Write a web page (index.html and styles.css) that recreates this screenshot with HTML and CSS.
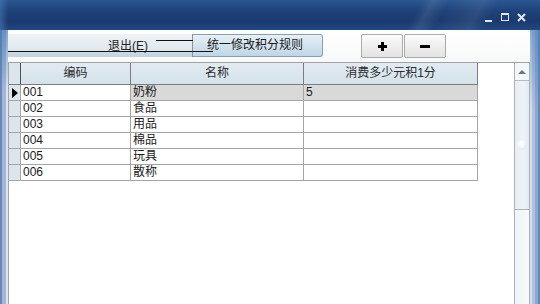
FILE: index.html
```html
<!DOCTYPE html>
<html lang="zh">
<head>
  <meta charset="UTF-8" />
  <title>积分规则</title>
  <link rel="stylesheet" href="styles.css">
</head>
<body>
  <div class="window">

    <!-- 标题栏 -->
    <div class="titlebar">
      <svg class="caption-buttons" width="41" height="10" viewBox="0 0 41 10">
        <rect x="0" y="8" width="7" height="2" fill="#dde8f4"/>
        <rect x="16.5" y="1.5" width="7" height="7" fill="none" stroke="#dde8f4" stroke-width="1"/>
        <rect x="16" y="1" width="8" height="2" fill="#dde8f4"/>
        <path d="M33 2 L40 9 M40 2 L33 9" stroke="#dde8f4" stroke-width="2"/>
      </svg>
    </div>

    <div class="frame">
      <div class="frame-left"></div>

      <div class="client">
        <!-- 工具栏 -->
        <div class="toolbar">
          <div class="rule-button">
            <div class="exit-part">
              <span class="exit-label">退出(E)</span>
            </div>
            <div class="rule-part">统一修改积分规则</div>
          </div>
          <div class="step-buttons">
            <button class="step">
              <svg width="9" height="9" viewBox="0 0 9 9"><rect x="0" y="3" width="9" height="3"/><rect x="3" y="0" width="3" height="9"/></svg>
            </button>
            <button class="step">
              <svg width="10" height="3" viewBox="0 0 10 3"><rect x="0" y="0" width="10" height="3"/></svg>
            </button>
          </div>
        </div>

        <!-- 数据表 -->
        <div class="grid">
          <div class="grid-body">
            <table class="data-table">
              <thead>
                <tr>
                  <th class="ind"></th>
                  <th class="col-code">编码</th>
                  <th class="col-name">名称</th>
                  <th class="col-rate">消费多少元积1分</th>
                </tr>
              </thead>
              <tbody>
                <tr class="current">
                  <td class="ind"><span class="pointer"></span></td>
                  <td>001</td>
                  <td class="sel">奶粉</td>
                  <td class="sel">5</td>
                </tr>
                <tr><td class="ind"></td><td>002</td><td>食品</td><td></td></tr>
                <tr><td class="ind"></td><td>003</td><td>用品</td><td></td></tr>
                <tr><td class="ind"></td><td>004</td><td>棉品</td><td></td></tr>
                <tr><td class="ind"></td><td>005</td><td>玩具</td><td></td></tr>
                <tr><td class="ind"></td><td>006</td><td>散称</td><td></td></tr>
              </tbody>
            </table>
          </div>

          <div class="scrollbar">
            <div class="scroll-up"><span class="arrow-up"></span></div>
            <div class="scroll-thumb"><span class="grip"></span></div>
            <div class="scroll-track"></div>
          </div>
        </div>
      </div>

      <div class="frame-right"></div>
    </div>
  </div>
</body>
</html>
```

FILE: styles.css
```css
body, html {
  margin: 0;
  width: 540px;
  height: 304px;
  overflow: hidden;
  font-family: "Liberation Sans", "Noto Sans CJK SC", sans-serif;
  font-size: 12px;
  color: #1a1a1a;
}

.window {
  display: flex;
  flex-direction: column;
  height: 304px;
}

/* 标题栏 */
.titlebar {
  height: 30px;
  flex: none;
  box-sizing: border-box;
  display: flex;
  justify-content: flex-end;
  align-items: flex-start;
  padding: 12px 14px 0 0;
  background:
    linear-gradient(118deg, transparent 0 76%, rgba(255, 255, 255, 0.09) 78%, transparent 81%, rgba(255, 255, 255, 0.07) 87%, transparent 90%),
    linear-gradient(to right, rgba(80, 130, 190, 0.5) 0, transparent 8px),
    linear-gradient(to bottom, #2b5791 0, #1f427a 35%, #1b3a6f 70%, #22477f 100%);
}

.frame {
  flex: 1;
  display: flex;
  min-height: 0;
}

.frame-left {
  width: 8px;
  flex: none;
  background:
    linear-gradient(to bottom, rgba(60, 120, 180, 0.6) 0, transparent 60px),
    linear-gradient(to right, #6d88b6 0 2px, #a2b6d9 2px 6px, #dce4f0 6px 8px);
}

.frame-right {
  width: 10px;
  flex: none;
  background:
    linear-gradient(to bottom, rgba(60, 120, 180, 0.5) 0, transparent 80px),
    linear-gradient(to right, #d6dfec 0 2px, #b0c2df 2px 5px, #8ca8d1 5px 8px, #6b87b7 8px 10px);
}

.client {
  flex: 1;
  min-width: 0;
  display: flex;
  flex-direction: column;
  background: #fff;
}

/* 工具栏 */
.toolbar {
  height: 32px;
  flex: none;
  box-sizing: border-box;
  padding-top: 4px;
  display: flex;
  align-items: flex-start;
  background: linear-gradient(to bottom, #ffffff 0, #f7f8f9 100%);
}

.rule-button {
  position: relative;
  display: flex;
  width: 315px;
  height: 23px;
}

/* 残留的重绘线条 */
.rule-button::before {
  content: "";
  position: absolute;
  left: 148px;
  top: 6px;
  width: 37px;
  height: 1px;
  background: #111;
}

.rule-button::after {
  content: "";
  position: absolute;
  left: 0;
  top: 17px;
  width: 205px;
  height: 1px;
  background: #111;
}

.exit-part {
  width: 185px;
  box-sizing: border-box;
  padding-left: 100px;
  border-right: 1px solid #8a949c;
  background: linear-gradient(to bottom, #eef3f6 0, #dfe7ed 17px, #c9d9e4 18px, #c3d4e0 100%);
}

.exit-label {
  display: block;
  margin-top: 5px;
  line-height: 14px;
  color: #222;
}

.rule-part {
  flex: 1;
  box-sizing: border-box;
  padding-left: 14px;
  border: 1px solid #8d9fad;
  border-left: none;
  border-radius: 0 3px 3px 0;
  background: linear-gradient(to bottom, #e6f0f7 0, #d3e3ee 50%, #c0d5e4 100%);
  line-height: 21px;
  color: #1a1a1a;
}

.step-buttons {
  display: flex;
  gap: 1px;
  margin-left: 38px;
}

.step {
  width: 42px;
  height: 24px;
  padding: 0;
  border: 1px solid #aaaaaa;
  border-radius: 2px;
  background: linear-gradient(to bottom, #fbfbfb 0, #efefef 50%, #e2e2e2 100%);
  display: flex;
  align-items: center;
  justify-content: center;
}

.step svg {
  fill: #000;
}

/* 数据表 */
.grid {
  flex: 1;
  min-height: 0;
  display: flex;
  border-top: 1px solid #a3a3a3;
}

.grid-body {
  flex: 1;
  min-width: 0;
  border-left: 1px solid #a3a3a3;
  background: #fff;
}

.data-table {
  border-collapse: separate;
  border-spacing: 0;
  table-layout: fixed;
  width: 469px;
}

.data-table th,
.data-table td {
  box-sizing: border-box;
  height: 16px;
  padding: 0 2px;
  border-right: 1px solid #a5a5a5;
  border-bottom: 1px solid #a5a5a5;
  line-height: 15px;
  white-space: nowrap;
  overflow: hidden;
  text-align: left;
  font-weight: normal;
}

.data-table th {
  height: 22px;
  text-align: center;
  color: #2a2a2a;
  border-right-color: #7d7d7d;
  border-bottom-color: #7d7d7d;
  background: linear-gradient(to bottom, #e2ebf1 0, #d4e2eb 100%);
}

.data-table th.ind {
  border-right-color: #505050;
}

.data-table .ind {
  width: 12px;
  padding: 0;
  background: #dbe5ec;
}

.col-code { width: 110px; }
.col-name { width: 173px; }
.col-rate { width: 174px; }

.data-table td.sel {
  background: #d9d9d9;
}

.pointer {
  display: block;
  width: 0;
  height: 0;
  margin-left: 3px;
  border-left: 6px solid #000;
  border-top: 5px solid transparent;
  border-bottom: 5px solid transparent;
}

/* 滚动条 */
.scrollbar {
  width: 16px;
  flex: none;
  box-sizing: border-box;
  display: flex;
  flex-direction: column;
  border-left: 1px solid #a9b2bb;
  border-right: 1px solid #a9b2bb;
  background: #f4f7fa;
}

.scroll-up {
  height: 17px;
  flex: none;
  display: flex;
  align-items: center;
  justify-content: center;
}

.arrow-up {
  width: 0;
  height: 0;
  border-left: 4px solid transparent;
  border-right: 4px solid transparent;
  border-bottom: 4px solid #6e7378;
}

.scroll-thumb {
  height: 130px;
  flex: none;
  box-sizing: border-box;
  display: flex;
  align-items: center;
  justify-content: center;
  border-top: 1px solid #b4bcc4;
  border-bottom: 1px solid #a9b2bb;
  background: linear-gradient(to right, #e6edf3 0, #eef3f8 60%, #e3eaf1 100%);
}

.grip {
  width: 10px;
  height: 10px;
  border-radius: 50%;
  background: radial-gradient(circle at 40% 35%, #ffffff 0, #f2f5f8 45%, #d3dbe3 100%);
}

.scroll-track {
  flex: 1;
  background: linear-gradient(to right, #f0f4f8 0, #f8fafc 100%);
}
```
